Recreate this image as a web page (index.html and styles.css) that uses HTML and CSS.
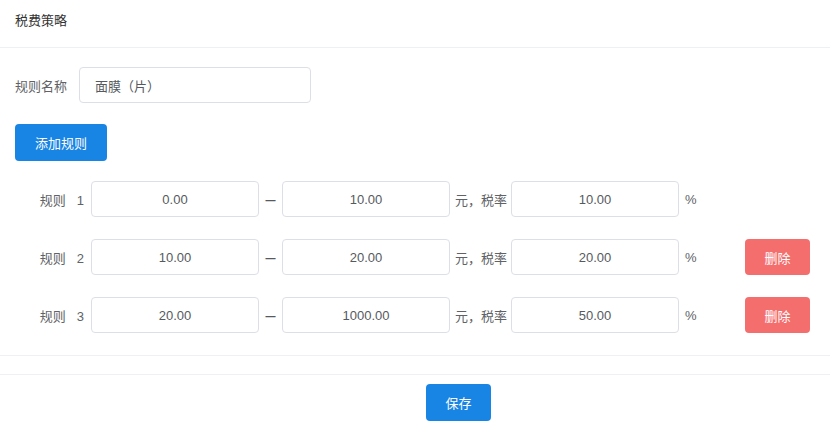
FILE: index.html
```html
<!DOCTYPE html>
<html lang="zh">
<head>
<meta charset="utf-8">
<title>税费策略</title>
<link rel="stylesheet" href="styles.css">
</head>
<body>
<div class="panel">
  <div class="panel-header">税费策略</div>
  <div class="panel-body">
    <div class="name-row">
      <span class="name-label">规则名称</span>
      <div class="input name-input">面膜（片）</div>
    </div>
    <button class="btn btn-primary add-btn">添加规则</button>
    <div class="rules">
      <div class="rule-row">
        <span class="rule-label"><span class="rule-word">规则</span>1</span>
        <div class="input num">0.00</div>
        <span class="dash">–</span>
        <div class="input num">10.00</div>
        <span class="unit">元，税率</span>
        <div class="input num">10.00</div>
        <span class="pct">%</span>
      </div>
      <div class="rule-row">
        <span class="rule-label"><span class="rule-word">规则</span>2</span>
        <div class="input num">10.00</div>
        <span class="dash">–</span>
        <div class="input num">20.00</div>
        <span class="unit">元，税率</span>
        <div class="input num">20.00</div>
        <span class="pct">%</span>
        <button class="btn btn-danger">删除</button>
      </div>
      <div class="rule-row">
        <span class="rule-label"><span class="rule-word">规则</span>3</span>
        <div class="input num">20.00</div>
        <span class="dash">–</span>
        <div class="input num">1000.00</div>
        <span class="unit">元，税率</span>
        <div class="input num">50.00</div>
        <span class="pct">%</span>
        <button class="btn btn-danger">删除</button>
      </div>
    </div>
  </div>
  <div class="spacer"></div>
  <div class="panel-footer">
    <button class="btn btn-primary save-btn">保存</button>
  </div>
</div>
</body>
</html>
```

FILE: styles.css
```css
* { box-sizing: border-box; }

html, body {
  margin: 0;
  padding: 0;
  background: #ffffff;
}

body {
  font-family: "Helvetica Neue", "Liberation Sans", Arial, "Noto Sans CJK SC", sans-serif;
  font-size: 13px;
  color: #606266;
}

.panel-header {
  height: 48px;
  padding: 11px 15px 0;
  line-height: 20px;
  color: #333333;
  border-bottom: 1px solid #eef0f4;
}

.panel-body {
  padding: 19px 20px 22px 15px;
  border-bottom: 1px solid #eef0f4;
}

.name-row {
  display: flex;
  align-items: center;
  height: 36px;
}

.name-label {
  width: 64px;
  color: #606266;
}

.input {
  height: 36px;
  border: 1px solid #dcdfe6;
  border-radius: 4px;
  background: #fff;
  display: flex;
  align-items: center;
  color: #555a60;
}

.name-input {
  width: 232px;
  padding-left: 15px;
}

.btn {
  border: none;
  border-radius: 4px;
  color: #fff;
  font-family: inherit;
  font-size: 13px;
  cursor: pointer;
  padding: 0;
}

.btn-primary {
  background: #1884e4;
}

.add-btn {
  display: block;
  margin-top: 21px;
  width: 92px;
  height: 37px;
}

.rules {
  margin-top: 20px;
  display: flex;
  flex-direction: column;
  gap: 22px;
}

.rule-row {
  display: flex;
  align-items: center;
  height: 36px;
}

.rule-label {
  width: 76px;
  text-align: right;
  padding-right: 7px;
  color: #606266;
}

.rule-word {
  margin-right: 11px;
}

.num {
  width: 168px;
  justify-content: center;
}

.dash {
  width: 23px;
  text-align: center;
  font-size: 18px;
  color: #555a60;
}

.unit {
  margin: 0 4px 0 5px;
  color: #606266;
}

.pct {
  margin-left: 6px;
  color: #606266;
}

.btn-danger {
  margin-left: auto;
  width: 65px;
  height: 36px;
  background: #f46e6e;
}

.spacer {
  height: 19px;
  border-bottom: 1px solid #eef0f4;
}

.panel-footer {
  display: flex;
  justify-content: center;
  padding-top: 9px;
  padding-left: 87px;
}

.save-btn {
  width: 65px;
  height: 37px;
}
```
